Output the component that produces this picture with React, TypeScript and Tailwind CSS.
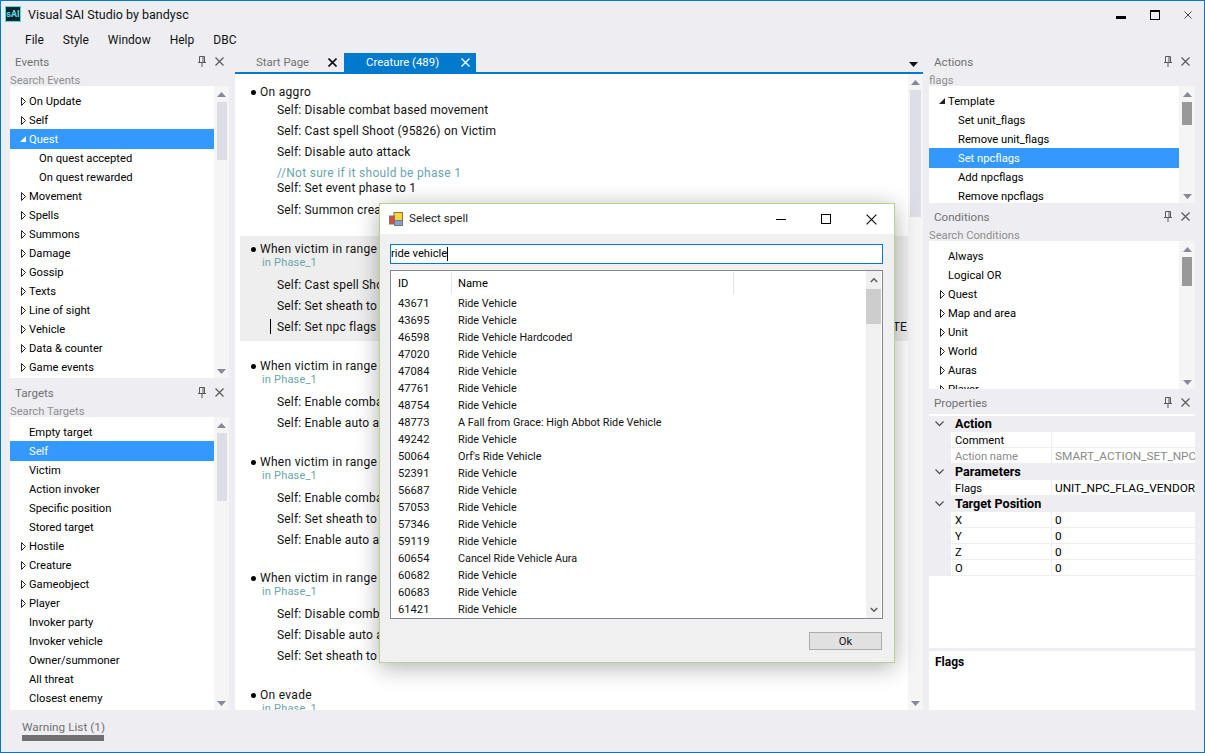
import React from "react";

const Tri = ({ open, white }: { open?: boolean; white?: boolean }) =>
  open ? (
    <svg width="6" height="6" viewBox="0 0 6 6" className="shrink-0">
      <path d="M0 6 L6 6 L6 0 Z" fill={white ? "#fff" : "#222"} />
    </svg>
  ) : (
    <svg width="5" height="9" viewBox="0 0 5 9" className="shrink-0 ml-px">
      <path d="M0.5 0.5 L4.5 4.5 L0.5 8.5 Z" fill="#fff" stroke="#222" strokeWidth="1" />
    </svg>
  );

const Pin = () => (
  <svg width="8" height="11" viewBox="0 0 8 11">
    <path d="M1.5 0.5H6.5V6.5H1.5ZM5 1V6M0 6.5H8M4 7V11" fill="none" stroke="#5a5a5a" strokeWidth="1" />
  </svg>
);
const X = ({ size = 9, color = "#5a5a5a", w = 1.2 }: { size?: number; color?: string; w?: number }) => (
  <svg width={size} height={size} viewBox="0 0 9 9">
    <path d="M0.5 0.5L8.5 8.5M8.5 0.5L0.5 8.5" stroke={color} strokeWidth={w} fill="none" />
  </svg>
);

const Header = ({ title }: { title: string }) => (
  <div className="h-[21px] flex items-center text-[#717171] text-[11.6px] pl-[5px] shrink-0">
    <span className="flex-1 pt-px">{title}</span>
    <span className="flex w-[16px] justify-center mb-[2px] mr-px"><Pin /></span>
    <span className="flex w-[16px] justify-center mb-[2px] mr-[2px]"><X /></span>
  </div>
);

type Item = { t: string; l?: number; a?: "r" | "d"; s?: boolean };

const Scroll = ({ thumb, color, w }: { thumb: string; color: string; w: string }) => (
  <div className={`${w} shrink-0 bg-[#f5f5f5] flex flex-col items-center relative`}>
    <svg width="9" height="5" viewBox="0 0 9 5" className="mt-[6px] shrink-0"><path d="M0 5L4.5 0L9 5Z" fill="#868999" /></svg>
    <div className={`${thumb} ${color}`} />
    <div className="flex-1" />
    <svg width="9" height="5" viewBox="0 0 9 5" className="mb-[4px] shrink-0"><path d="M0 0L4.5 5L9 0Z" fill="#868999" /></svg>
  </div>
);

const Tree = ({ items, thumb, color, h, w }: { items: Item[]; thumb: string; color: string; h: string; w: string }) => (
  <div className={`flex ${h} shrink-0 overflow-hidden`}>
    <div className="flex-1 bg-white pt-[5px] overflow-hidden">
      {items.map((it, i) => (
        <div
          key={i}
          className={`flex items-center whitespace-nowrap ${it.s ? "h-[20px] -mb-px pt-[3px] bg-[#3399ff] text-white" : "h-[19px] pt-[4px] text-black"} ${it.l ? "pl-[29px]" : "pl-[19px]"} relative`}
        >
          {it.a && (
            <span className="absolute left-[10px] top-[5px] flex h-[10px] items-center">
              <Tri open={it.a === "d"} white={it.s} />
            </span>
          )}
          {it.t}
        </div>
      ))}
    </div>
    <Scroll thumb={thumb} color={color} w={w} />
  </div>
);

const Search = ({ t }: { t: string }) => (
  <div className="h-[13px] leading-[15px] text-[#8f8f8f] shrink-0 whitespace-nowrap">{t}</div>
);

const events: Item[] = [
  { t: "On Update", a: "r" },
  { t: "Self", a: "r" },
  { t: "Quest", a: "d", s: true },
  { t: "On quest accepted", l: 1 },
  { t: "On quest rewarded", l: 1 },
  { t: "Movement", a: "r" },
  { t: "Spells", a: "r" },
  { t: "Summons", a: "r" },
  { t: "Damage", a: "r" },
  { t: "Gossip", a: "r" },
  { t: "Texts", a: "r" },
  { t: "Line of sight", a: "r" },
  { t: "Vehicle", a: "r" },
  { t: "Data & counter", a: "r" },
  { t: "Game events", a: "r" },
];
const targets: Item[] = [
  { t: "Empty target" },
  { t: "Self", s: true },
  { t: "Victim" },
  { t: "Action invoker" },
  { t: "Specific position" },
  { t: "Stored target" },
  { t: "Hostile", a: "r" },
  { t: "Creature", a: "r" },
  { t: "Gameobject", a: "r" },
  { t: "Player", a: "r" },
  { t: "Invoker party" },
  { t: "Invoker vehicle" },
  { t: "Owner/summoner" },
  { t: "All threat" },
  { t: "Closest enemy" },
];
const actions: Item[] = [
  { t: "Template", a: "d" },
  { t: "Set unit_flags", l: 1 },
  { t: "Remove unit_flags", l: 1 },
  { t: "Set npcflags", l: 1, s: true },
  { t: "Add npcflags", l: 1 },
  { t: "Remove npcflags", l: 1 },
];
const conditions: Item[] = [
  { t: "Always" },
  { t: "Logical OR" },
  { t: "Quest", a: "r" },
  { t: "Map and area", a: "r" },
  { t: "Unit", a: "r" },
  { t: "World", a: "r" },
  { t: "Auras", a: "r" },
  { t: "Player", a: "r" },
];

const spells: [string, string][] = [
  ["43671", "Ride Vehicle"],
  ["43695", "Ride Vehicle"],
  ["46598", "Ride Vehicle Hardcoded"],
  ["47020", "Ride Vehicle"],
  ["47084", "Ride Vehicle"],
  ["47761", "Ride Vehicle"],
  ["48754", "Ride Vehicle"],
  ["48773", "A Fall from Grace: High Abbot Ride Vehicle"],
  ["49242", "Ride Vehicle"],
  ["50064", "Orf's Ride Vehicle"],
  ["52391", "Ride Vehicle"],
  ["56687", "Ride Vehicle"],
  ["57053", "Ride Vehicle"],
  ["57346", "Ride Vehicle"],
  ["59119", "Ride Vehicle"],
  ["60654", "Cancel Ride Vehicle Aura"],
  ["60682", "Ride Vehicle"],
  ["60683", "Ride Vehicle"],
  ["61421", "Ride Vehicle"],
];

const Line = ({ t, caret, end }: { t: string; caret?: boolean; end?: string }) => (
  <div className="h-[21px] flex items-center pl-[37px] relative whitespace-nowrap">
    {caret && <span className="absolute left-[30px] top-[3px] h-[15px] w-px bg-black" />}
    <span className="flex-1">{t}</span>
    {end && <span className="mr-px">{end}</span>}
  </div>
);
const Title = ({ t }: { t: string }) => (
  <div className="h-[14px] flex items-center pl-[11px] tracking-[0.3px]">
    <span className="w-[5px] h-[5px] rounded-full bg-black mr-[4px]" />
    <span>{t}</span>
  </div>
);
const Phase = () => <div className="h-[14px] leading-[14px] pl-[22px] text-[11px] text-[#6aa5ad]">in Phase_1</div>;

const Block = ({ t, lines, sel, gap }: { t: string; lines: { t: string; caret?: boolean; end?: string }[]; sel?: boolean; gap: string }) => (
  <div className={`pt-[6px] pb-[4px] ${gap} ${sel ? "bg-[#eeeeee]" : ""}`}>
    <Title t={t} />
    <Phase />
    <div className="mt-[4px]">
      {lines.map((l, i) => <Line key={i} {...l} />)}
    </div>
  </div>
);

const Prop = ({ k, v, dim }: { k: string; v: string; dim?: boolean }) => (
  <div className="flex h-[16px] pl-[22px] bg-[#eeeef2]">
    <div className={`w-[100px] h-[15px] leading-[17px] bg-white pl-[4px] ${dim ? "text-[#8a8a8a]" : "text-black"}`}>{k}</div>
    <div className={`flex-1 h-[15px] leading-[17px] text-[11.8px] bg-white ml-px pl-[3px] whitespace-nowrap overflow-hidden ${dim ? "text-[#8a8a8a]" : "text-black"}`}>{v}</div>
  </div>
);
const Cat = ({ t }: { t: string }) => (
  <div className="flex h-[16px] items-center bg-[#eeeef2] font-bold text-[12.6px] text-black relative pl-[26px]">
    <svg width="9" height="6" viewBox="0 0 9 6" className="absolute left-[6px] top-[5px]">
      <path d="M0.5 0.5L4.5 4.5L8.5 0.5" fill="none" stroke="#555" strokeWidth="1.3" />
    </svg>
    {t}
  </div>
);

export default function App() {
  return (
    <div className="relative w-[1205px] h-[753px] overflow-hidden border border-[#007acc] bg-[#eeeef2] flex flex-col text-[11.2px] text-black font-['Roboto',sans-serif]">
      {/* Title bar */}
      <div className="h-[28px] flex items-center shrink-0 relative">
        <div className="ml-[4px] mb-[2px] w-[16px] h-[16px] bg-[#10262b] border border-[#3fe0e0] flex items-center justify-center text-[9px] font-bold text-[#5fd8e8] leading-none">sAI</div>
        <span className="ml-[7px] text-[12.5px] text-[#111]">Visual SAI Studio by bandysc</span>
        <div className="flex-1" />
        <div className="w-[10px] h-[3px] bg-black mr-[24px] mt-[4px]" />
        <div className="w-[10px] h-[10px] border border-black border-t-[2px] mr-[24px]" />
        <div className="mr-[12px] flex"><X size={8} color="#333" w={1} /></div>
      </div>
      {/* Menu */}
      <div className="h-[22px] flex items-center shrink-0 pl-[24px] text-[12px] text-[#111] gap-[19px]">
        <span>File</span><span>Style</span><span>Window</span><span>Help</span><span>DBC</span>
      </div>
      {/* Body */}
      <div className="flex-1 min-h-0 flex pt-px pl-[9px] pr-[9px] gap-[6px]">
        {/* Left */}
        <div className="w-[219px] shrink-0 flex flex-col">
          <Header title="Events" />
          <Search t="Search Events" />
          <Tree items={events} thumb="mt-[5px] h-[58px] w-[10px]" color="bg-[#dddde5]" h="h-[292px]" w="w-[15px]" />
          <div className="h-[5px]" />
          <Header title="Targets" />
          <Search t="Search Targets" />
          <Tree items={targets} thumb="mt-[5px] h-[68px] w-[10px]" color="bg-[#dddde5]" h="h-[293px]" w="w-[15px]" />
        </div>
        {/* Center */}
        <div className="w-[688px] shrink-0 flex flex-col">
          <div className="h-[20px] flex items-end shrink-0">
            <div className="w-[109px] h-[19px] flex items-center pl-[21px] pt-px text-[#717171] text-[11.4px] relative">
              <span>Start Page</span>
              <span className="absolute right-[7px] top-[5px] flex"><X size={9} color="#111" w={1.6} /></span>
            </div>
            <div className="w-[132px] h-[19px] flex items-center pl-[22px] pt-px bg-[#007acc] text-[11.4px] text-white relative">
              <span>Creature (489)</span>
              <span className="absolute right-[6px] top-[5px] flex"><X size={9} color="#fff" w={1.3} /></span>
            </div>
            <div className="flex-1" />
            <svg width="9" height="5" viewBox="0 0 9 5" className="mb-[5px] mr-[5px]"><path d="M0 0L4.5 5L9 0Z" fill="#111" /></svg>
          </div>
          <div className="h-[2px] bg-[#007acc] shrink-0" />
          <div className="flex flex-1 min-h-0">
            <div className="flex-1 bg-white overflow-hidden pl-[5px] text-[12px] tracking-[0.18px] text-[#111]">
              <div className="pt-[5px] mb-[11px] h-[151px]">
                <div className="pt-[6px]">
                  <Title t="On aggro" />
                </div>
                <Line t="Self: Disable combat based movement" />
                <Line t="Self: Cast spell Shoot (95826) on Victim" />
                <Line t="Self: Disable auto attack" />
                <div className="h-[15px] mt-[4px] leading-[15px] pl-[37px] tracking-[0.3px] text-[#6aa5ad]">//Not sure if it should be phase 1</div>
                <div className="h-[15px] leading-[15px] pl-[37px]">Self: Set event phase to 1</div>
                <div className="mt-[3px]"><Line t="Self: Summon creature" /></div>
              </div>
              <Block sel gap="mb-[12px]" t="When victim in range" lines={[{ t: "Self: Cast spell Shoot" }, { t: "Self: Set sheath to ranged" }, { t: "Self: Set npc flags", caret: true, end: "TE" }]} />
              <Block gap="mb-[12px]" t="When victim in range" lines={[{ t: "Self: Enable combat based movement" }, { t: "Self: Enable auto attack" }]} />
              <Block gap="mb-[11px]" t="When victim in range" lines={[{ t: "Self: Enable combat based movement" }, { t: "Self: Set sheath to melee" }, { t: "Self: Enable auto attack" }]} />
              <Block gap="mb-[12px]" t="When victim in range" lines={[{ t: "Self: Disable combat based movement" }, { t: "Self: Disable auto attack" }, { t: "Self: Set sheath to ranged" }]} />
              <Block gap="mb-[12px]" t="On evade" lines={[]} />
            </div>
            <Scroll thumb="mt-[5px] h-[127px] w-[11px]" color="bg-[#dddde5]" w="w-[15px]" />
          </div>
        </div>
        {/* Right */}
        <div className="w-[266px] shrink-0 flex flex-col">
          <Header title="Actions" />
          <Search t="flags" />
          <Tree items={actions} thumb="mt-[5px] h-[23px] w-[10px]" color="bg-[#999999]" h="h-[117px]" w="w-[16px]" />
          <div className="h-[4px]" />
          <Header title="Conditions" />
          <Search t="Search Conditions" />
          <Tree items={conditions} thumb="mt-[5px] h-[29px] w-[10px]" color="bg-[#999999]" h="h-[148px]" w="w-[16px]" />
          <div className="h-[4px]" />
          <Header title="Properties" />
          <div className="h-[234px] bg-white pt-[2px] shrink-0 overflow-hidden">
            <Cat t="Action" />
            <Prop k="Comment" v="" />
            <Prop k="Action name" v="SMART_ACTION_SET_NPC" dim />
            <Cat t="Parameters" />
            <Prop k="Flags" v="UNIT_NPC_FLAG_VENDOR" />
            <Cat t="Target Position" />
            <Prop k="X" v="0" />
            <Prop k="Y" v="0" />
            <Prop k="Z" v="0" />
            <Prop k="O" v="0" />
          </div>
          <div className="h-[3px]" />
          <div className="flex-1 bg-white pl-[6px] pt-[2px] text-[12px] font-bold">Flags</div>
        </div>
      </div>
      {/* Footer */}
      <div className="h-[42px] shrink-0 pl-[21px] pt-[9px]">
        <div className="w-[82px]">
          <div className="h-[16px] leading-[16px] text-[11.8px] text-[#717171] whitespace-nowrap">Warning List (1)</div>
          <div className="h-[6px] bg-[#707070]" />
        </div>
      </div>

      {/* Dialog */}
      <div className="absolute left-[378px] top-[202px] w-[516px] h-[460px] bg-[#f0f0f0] border border-[#b9d08f] shadow-[0_4px_22px_rgba(0,0,0,0.32)] flex flex-col">
        <div className="h-[30px] bg-white flex items-center shrink-0 pl-[9px]">
          <svg width="14" height="14" viewBox="0 0 14 14" className="shrink-0">
            <rect x="5" y="0.5" width="8.5" height="8" fill="#f6d545" stroke="#8a7a30" />
            <rect x="0.5" y="4" width="5" height="8" fill="#d84a3a" stroke="#777" />
            <rect x="5.5" y="8.5" width="8" height="5" fill="#7fa4dc" stroke="#777" />
          </svg>
          <span className="ml-[6px] text-[11.6px] text-[#222]">Select spell</span>
          <div className="flex-1" />
          <div className="w-[10px] h-px bg-black mr-[35px]" />
          <div className="w-[10px] h-[10px] border border-black mr-[35px]" />
          <div className="mr-[17px] flex"><X size={11} color="#111" w={1} /></div>
        </div>
        <div className="ml-[10px] mr-[11px] mt-[10px] h-[20px] border border-[#0078d7] bg-white flex items-center shrink-0">
          <span>ride vehicle</span><span className="w-px h-[14px] bg-black" />
        </div>
        <div className="ml-[10px] mr-[11px] mt-[6px] h-[349px] border border-[#828790] bg-white flex shrink-0 overflow-hidden">
          <div className="flex-1 min-w-0">
            <div className="h-[22px] mt-px flex items-center">
              <div className="w-[61px] h-[22px] pl-[7px] pt-[2px] flex items-center border-r border-[#e5e5e5]">ID</div>
              <div className="w-[282px] h-[22px] pl-[6px] pt-[2px] flex items-center border-r border-[#e5e5e5]">Name</div>
            </div>
            <div className="pt-[2px] text-[10.8px]">
              {spells.map(([id, n]) => (
                <div key={id} className="h-[17px] flex items-center text-[#111]">
                  <div className="w-[60px] pl-[7px] text-[11.2px]">{id}</div>
                  <div className="pl-[7px]">{n}</div>
                </div>
              ))}
            </div>
          </div>
          <div className="w-[15px] shrink-0 mr-px bg-[#f0f0f0] flex flex-col">
            <div className="h-[18px] flex items-center justify-center shrink-0">
              <svg width="8" height="6" viewBox="0 0 8 6"><path d="M0.8 5L4 1.8L7.2 5" fill="none" stroke="#606060" strokeWidth="1.6" /></svg>
            </div>
            <div className="h-[35px] bg-[#cdcdcd] shrink-0" />
            <div className="flex-1" />
            <div className="h-[17px] flex items-center justify-center shrink-0">
              <svg width="8" height="6" viewBox="0 0 8 6"><path d="M0.8 1L4 4.2L7.2 1" fill="none" stroke="#606060" strokeWidth="1.6" /></svg>
            </div>
          </div>
        </div>
        <div className="flex justify-end pr-[12px] mt-[13px]">
          <div className="w-[73px] h-[18px] pt-[2px] border border-[#adadad] bg-[#e1e1e1] flex items-center justify-center text-[#111]">Ok</div>
        </div>
      </div>
    </div>
  );
}
